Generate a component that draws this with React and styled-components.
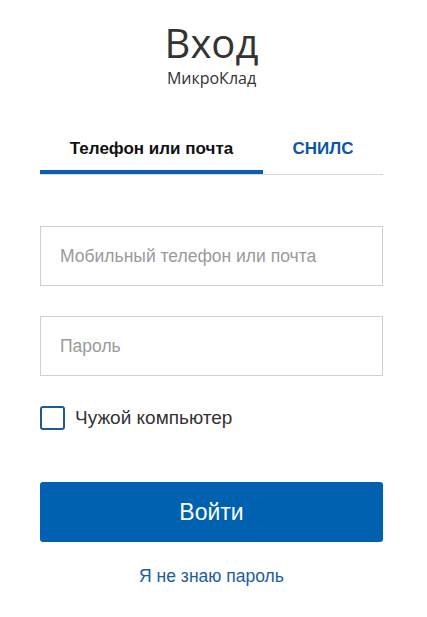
import React, { useState } from "react";
import styled, { createGlobalStyle } from "styled-components";

const GlobalStyle = createGlobalStyle`
  html, body {
    margin: 0;
    padding: 0;
    background: #fff;
  }
  body {
    font-family: "Liberation Sans", Arial, sans-serif;
  }
  * {
    box-sizing: border-box;
  }
`;

const Page = styled.div`
  width: 427px;
  padding: 20px 44px 0 40px;
`;

const Header = styled.div`
  display: flex;
  flex-direction: column;
  align-items: center;
  margin-bottom: 39px;
`;

const Title = styled.h1`
  margin: 0;
  font-family: "Open Sans", "Noto Sans", sans-serif;
  font-weight: 400;
  font-size: 40px;
  line-height: 46px;
  color: #333;
`;

const Subtitle = styled.div`
  margin-top: 3px;
  font-family: "Open Sans", "Noto Sans", sans-serif;
  font-size: 16px;
  line-height: 18px;
  color: #333;
`;

const Tabs = styled.div`
  display: flex;
  border-bottom: 1px solid #d9d9d9;
  margin-bottom: 51px;
`;

const Tab = styled.button`
  flex: ${(p) => p.$grow};
  border: none;
  background: none;
  padding: 13px 0 11px;
  font-family: "Liberation Sans", Arial, sans-serif;
  font-weight: 700;
  font-size: 17px;
  line-height: 20px;
  color: ${(p) => (p.$active ? "#111" : "#0b58a0")};
  border-bottom: 4px solid ${(p) => (p.$active ? "#0b5fae" : "transparent")};
  cursor: pointer;
`;

const Form = styled.form`
  display: flex;
  flex-direction: column;
`;

const Input = styled.input`
  height: 60px;
  width: 100%;
  border: 1px solid #cfcfcf;
  padding: 0 19px;
  font-family: "Liberation Sans", Arial, sans-serif;
  font-size: 17.5px;
  color: #333;
  outline: none;
  margin-bottom: 30px;

  &::placeholder {
    color: #9a9a9a;
  }
`;

const CheckRow = styled.label`
  display: flex;
  align-items: center;
  gap: 10px;
  font-size: 19px;
  color: #333;
  margin-bottom: 52px;
  cursor: pointer;
`;

const Box = styled.span`
  width: 25px;
  height: 24px;
  border: 2px solid #1f5a94;
  border-radius: 3px;
  background: ${(p) => (p.$checked ? "#1f5a94" : "#fff")};
`;

const Submit = styled.button`
  height: 60px;
  width: 100%;
  border: none;
  border-radius: 3px;
  background: #0061b1;
  color: #fff;
  font-family: "Liberation Sans", Arial, sans-serif;
  font-size: 23px;
  cursor: pointer;
`;

const Forgot = styled.a`
  display: block;
  text-align: center;
  margin-top: 24px;
  font-size: 17.5px;
  color: #1d5c9c;
  text-decoration: none;
`;

export default function App() {
  const [tab, setTab] = useState(0);
  const [checked, setChecked] = useState(false);

  return (
    <>
      <GlobalStyle />
      <Page>
        <Header>
          <Title>Вход</Title>
          <Subtitle>МикроКлад</Subtitle>
        </Header>
        <Tabs>
          <Tab $grow="0 0 223px" $active={tab === 0} onClick={() => setTab(0)}>
            Телефон или почта
          </Tab>
          <Tab $grow="1" $active={tab === 1} onClick={() => setTab(1)}>
            СНИЛС
          </Tab>
        </Tabs>
        <Form onSubmit={(e) => e.preventDefault()}>
          <Input placeholder="Мобильный телефон или почта" />
          <Input type="password" placeholder="Пароль" />
          <CheckRow onClick={() => setChecked(!checked)}>
            <Box $checked={checked} />
            Чужой компьютер
          </CheckRow>
          <Submit type="submit">Войти</Submit>
        </Form>
        <Forgot href="#">Я не знаю пароль</Forgot>
      </Page>
    </>
  );
}
